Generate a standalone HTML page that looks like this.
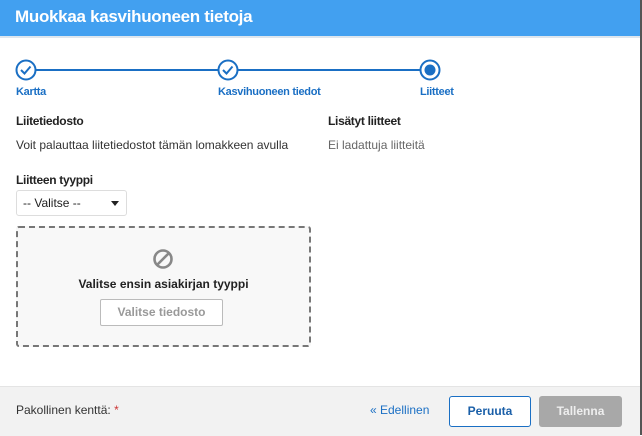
<!DOCTYPE html>
<html><head><style>
body{margin:0;width:642px;height:435px;position:relative;overflow:hidden;background:#fff;font-family:"Liberation Sans",sans-serif;color:#333}
.a{position:absolute;white-space:nowrap}
</style></head><body>
<div class="a" style="left:0;top:0;width:640px;height:36px;background:#42a0f0"></div>
<div class="a" style="left:15px;top:7px;font-size:17px;font-weight:bold;color:#fff;letter-spacing:-0.3px">Muokkaa kasvihuoneen tietoja</div>
<div class="a" style="left:640px;top:0;width:2px;height:435px;background:#555"></div>
<div class="a" style="left:0;top:36px;width:640px;height:2px;background:#dde6ee"></div>
<svg class="a" style="left:0;top:55px" width="460" height="32">
<line x1="36" y1="15" x2="218" y2="15" stroke="#1a6fc4" stroke-width="2"/>
<line x1="238" y1="15" x2="420" y2="15" stroke="#1a6fc4" stroke-width="2"/>
<circle cx="26" cy="15" r="9.5" fill="#fff" stroke="#1a6fc4" stroke-width="2"/>
<path d="M21 15l3.5 3.5 6-7" fill="none" stroke="#1a6fc4" stroke-width="2"/>
<circle cx="228" cy="15" r="9.5" fill="#fff" stroke="#1a6fc4" stroke-width="2"/>
<path d="M223 15l3.5 3.5 6-7" fill="none" stroke="#1a6fc4" stroke-width="2"/>
<circle cx="430" cy="15" r="9.5" fill="#fff" stroke="#1a6fc4" stroke-width="2"/>
<circle cx="430" cy="15" r="5.5" fill="#1a6fc4"/>
</svg>
<div class="a" style="left:16px;top:86px;font-size:11px;font-weight:bold;color:#1a6fc4;letter-spacing:-0.3px">Kartta</div>
<div class="a" style="left:218px;top:86px;font-size:11px;font-weight:bold;color:#1a6fc4;letter-spacing:-0.3px">Kasvihuoneen tiedot</div>
<div class="a" style="left:420px;top:86px;font-size:11px;font-weight:bold;color:#1a6fc4;letter-spacing:-0.3px">Liitteet</div>
<div class="a" style="left:16px;top:114px;font-size:12px;font-weight:bold;color:#222;letter-spacing:-0.3px">Liitetiedosto</div>
<div class="a" style="left:16px;top:138px;font-size:12px;color:#333">Voit palauttaa liitetiedostot tämän lomakkeen avulla</div>
<div class="a" style="left:328px;top:114px;font-size:12px;font-weight:bold;color:#222;letter-spacing:-0.3px">Lisätyt liitteet</div>
<div class="a" style="left:328px;top:138px;font-size:12px;color:#666">Ei ladattuja liitteitä</div>
<div class="a" style="left:16px;top:173px;font-size:12px;font-weight:bold;color:#222;letter-spacing:-0.3px">Liitteen tyyppi</div>
<div class="a" style="left:16px;top:190px;width:109px;height:24px;border:1px solid #ddd;border-radius:3px"></div>
<div class="a" style="left:23px;top:196px;font-size:12px;color:#222">-- Valitse --</div>
<div class="a" style="left:111px;top:201px;width:0;height:0;border-left:4px solid transparent;border-right:4px solid transparent;border-top:5px solid #222"></div>
<div class="a" style="left:16px;top:226px;width:291px;height:117px;border:2px dashed #777;border-radius:3px;background:#f8f8f8"></div>
<svg class="a" style="left:152px;top:248px" width="22" height="22"><circle cx="11" cy="11" r="8.5" fill="none" stroke="#888" stroke-width="2.6"/><line x1="5" y1="17" x2="17" y2="5" stroke="#888" stroke-width="2.6"/></svg>
<div class="a" style="left:16px;top:277px;width:295px;text-align:center;font-size:12px;font-weight:bold;color:#222">Valitse ensin asiakirjan tyyppi</div>
<div class="a" style="left:100px;top:299px;width:121px;height:25px;border:1px solid #bbb;border-radius:2px;background:#fff;text-align:center;line-height:25px;font-size:12px;font-weight:bold;color:#999">Valitse tiedosto</div>
<div class="a" style="left:0;top:386px;width:640px;height:49px;background:#f2f2f2;border-top:1px solid #e4e4e4"></div>
<div class="a" style="left:16px;top:403px;font-size:12px;color:#333">Pakollinen kenttä: <span style="color:#c33">*</span></div>
<div class="a" style="left:370px;top:403px;font-size:12px;color:#1a6fc4">« Edellinen</div>
<div class="a" style="left:449px;top:396px;width:80px;height:29px;border:1px solid #1a6fc4;border-radius:3px;background:#fff;text-align:center;line-height:29px;font-size:12px;font-weight:bold;color:#1a5fa8">Peruuta</div>
<div class="a" style="left:539px;top:396px;width:83px;height:31px;border-radius:3px;background:#a8a8a8;text-align:center;line-height:31px;font-size:12px;font-weight:bold;color:#eee">Tallenna</div>
</body></html>
